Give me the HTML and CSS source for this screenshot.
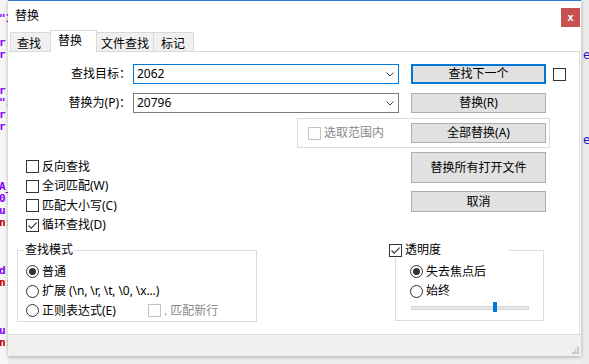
FILE: index.html
```html
<!DOCTYPE html>
<html lang="zh-CN">
<head>
<meta charset="utf-8">
<title>替换</title>
<link rel="stylesheet" href="styles.css">
</head>
<body>
<div class="screen">
  <div class="ed-left">
    <div class="p">"1</div><div></div><div class="p">r</div><div class="p">r</div><div></div><div></div>
    <div class="p">r</div><div class="p">":</div><div class="p">r</div><div class="p">r</div><div></div><div></div><div></div><div></div>
    <div class="p">A_</div><div class="p">0'</div><div class="p">u</div><div class="r">n:</div><div></div><div></div><div></div>
    <div class="p">d</div><div class="r">n:</div><div></div><div></div><div></div><div class="p">u</div><div class="r">n:</div>
  </div>

  <div class="dialog">
    <div class="titlebar">
      <span class="title">替换</span>
      <span class="close">x</span>
    </div>
    <div class="tabs">
      <span class="tab">查找</span><span class="tab active">替换</span><span class="tab">文件查找</span><span class="tab">标记</span>
    </div>
    <div class="panel">
      <div class="row">
        <span class="lbl">查找目标：</span>
        <div class="combo focus"><span>2062</span><svg class="chev" width="8" height="5" viewBox="0 0 8 5"><path d="M0.5 0.5 L4 4 L7.5 0.5" fill="none" stroke="#444" stroke-width="1"/></svg></div>
        <button class="btn default">查找下一个</button>
        <span class="cb top-cb"></span>
      </div>
      <div class="row row2">
        <span class="lbl">替换为(P)：</span>
        <div class="combo"><span>20796</span><svg class="chev" width="8" height="5" viewBox="0 0 8 5"><path d="M0.5 0.5 L4 4 L7.5 0.5" fill="none" stroke="#444" stroke-width="1"/></svg></div>
        <button class="btn">替换(R)</button>
      </div>
      <div class="scope">
        <span class="check dis"><span class="cb off"></span>选取范围内</span>
        <button class="btn">全部替换(A)</button>
      </div>
      <div class="mid">
        <div class="opts">
          <div class="check"><span class="cb"></span>反向查找</div>
          <div class="check"><span class="cb"></span>全词匹配(W)</div>
          <div class="check"><span class="cb"></span>匹配大小写(C)</div>
          <div class="check"><span class="cb"><svg width="11" height="11" viewBox="0 0 11 11"><path d="M1.5 5.5 L4.2 8.2 L9.6 2.6" fill="none" stroke="#333" stroke-width="1.1"/></svg></span>循环查找(D)</div>
        </div>
        <div class="midbtns">
          <button class="btn tall">替换所有打开文件</button>
          <button class="btn h21">取消</button>
        </div>
      </div>
      <div class="groups">
        <fieldset class="mode">
          <legend>查找模式</legend>
          <div class="check"><span class="rb on"></span>普通</div>
          <div class="check"><span class="rb"></span>扩展<span class="esc">(\n, \r, \t, \0, \x...)</span></div>
          <div class="check"><span class="rb"></span><span class="regex">正则表达式(E)</span><span class="cb off"></span><span class="distext">. 匹配新行</span></div>
        </fieldset>
        <fieldset class="trans">
          <legend><span class="cb"><svg width="11" height="11" viewBox="0 0 11 11"><path d="M1.5 5.5 L4.2 8.2 L9.6 2.6" fill="none" stroke="#333" stroke-width="1.1"/></svg></span><span class="lgtext">透明度</span></legend>
          <div class="check"><span class="rb on"></span>失去焦点后</div>
          <div class="check"><span class="rb"></span>始终</div>
          <div class="slider"><div class="track"></div><div class="thumb"></div></div>
        </fieldset>
      </div>
    </div>
    <div class="status">
      <svg width="7" height="7" viewBox="0 0 7 7">
        <rect x="5" y="0" width="2" height="2" fill="#c4c4c4"/>
        <rect x="2.5" y="2.5" width="2" height="2" fill="#c4c4c4"/>
        <rect x="5" y="2.5" width="2" height="2" fill="#c4c4c4"/>
        <rect x="0" y="5" width="2" height="2" fill="#c4c4c4"/>
        <rect x="2.5" y="5" width="2" height="2" fill="#c4c4c4"/>
        <rect x="5" y="5" width="2" height="2" fill="#c4c4c4"/>
      </svg>
    </div>
  </div>

  <div class="ed-right">
    <span class="e1">e</span>
    <span class="e2">e</span>
  </div>
</div>
</body>
</html>
```
FILE: styles.css
```css
html, body {
  margin: 0;
  padding: 0;
}
body {
  width: 589px;
  height: 364px;
  overflow: hidden;
  background: #eeeeee;
  font-family: "Noto Sans", "Noto Sans CJK SC", sans-serif;
  font-size: 12px;
  line-height: 16px;
  color: #000;
}
.screen {
  display: flex;
  height: 364px;
}

/* editor fragments behind dialog */
.ed-left {
  width: 8px;
  flex: none;
  overflow: hidden;
  background: #f6f6f6;
  padding-top: 13px;
  box-sizing: border-box;
  font: bold 11px/12px "DejaVu Sans Mono", monospace;
}
.ed-left div {
  height: 12px;
  white-space: pre;
  margin-left: -1px;
}
.ed-left .p { color: #8000ff; }
.ed-left .r { color: #c00000; }

.ed-right {
  width: 8px;
  flex: none;
  overflow: hidden;
  background: #ebebeb;
  font: 12px/12px "DejaVu Sans", sans-serif;
  color: #1a1ad0;
  padding-left: 2px;
  box-sizing: border-box;
}
.ed-right span { display: block; height: 12px; }
.ed-right .e1 { margin-top: 49px; }
.ed-right .e2 { margin-top: 73px; }

/* dialog */
.dialog {
  width: 573px;
  flex: none;
  height: 356px;
  box-sizing: border-box;
  border-top: 1px solid #2a7ad1;
  background: #fff;
  display: flex;
  flex-direction: column;
  box-shadow: 0 1px 4px rgba(0, 0, 0, 0.28);
  position: relative;
  z-index: 1;
}
.titlebar {
  height: 29px;
  flex: none;
  display: flex;
  justify-content: space-between;
  align-items: flex-start;
}
.title {
  padding-left: 7px;
  line-height: 29px;
}
.close {
  width: 19px;
  height: 19px;
  margin: 7px 1px 0 0;
  background: #c75050;
  color: #fff;
  font: bold 11px/18px "Liberation Sans", sans-serif;
  text-align: center;
}

.tabs {
  height: 21px;
  flex: none;
  display: flex;
  align-items: flex-end;
  padding-left: 2px;
  position: relative;
  z-index: 2;
}
.tab {
  height: 19px;
  box-sizing: border-box;
  border: 1px solid #d9d9d9;
  border-bottom: none;
  background: #f0f0f0;
  padding-top: 3px;
  line-height: 16px;
  margin-right: -1px;
}
.tab:nth-child(1) { width: 41px; padding-left: 6px; }
.tab:nth-child(2) { width: 47px; padding-left: 7px; }
.tab:nth-child(3) { width: 58px; padding-left: 4px; }
.tab:nth-child(4) { width: 41px; padding-left: 7px; }
.tab.active {
  height: 22px;
  margin-bottom: -1px;
  background: #fff;
  padding-top: 2px;
}

.panel {
  height: 283px;
  flex: none;
  box-sizing: border-box;
  border-top: 1px solid #d9d9d9;
  border-right: 1px solid #d9d9d9;
  margin-right: 1px;
  padding-top: 12px;
}
.row {
  display: flex;
  align-items: center;
  height: 20px;
}
.row2 { margin-top: 9px; }
.lbl {
  width: 123px;
  text-align: right;
  flex: none;
}
.combo {
  width: 266px;
  height: 20px;
  margin-left: 2px;
  box-sizing: border-box;
  border: 1px solid #7a7a7a;
  display: flex;
  align-items: center;
  justify-content: space-between;
  padding: 0 4px 0 3px;
  flex: none;
}
.combo.focus { border-color: #0078d7; }
.chev { display: block; }

.btn {
  width: 135px;
  height: 20px;
  box-sizing: border-box;
  border: 1px solid #adadad;
  background: #e1e1e1;
  font: inherit;
  line-height: 16px;
  color: #000;
  padding: 0;
  margin: 0 0 0 12px;
  flex: none;
}
.btn.default { border: 2px solid #0078d7; }
.btn.tall { height: 31px; }
.btn.h21 { height: 21px; }

.cb {
  width: 13px;
  height: 13px;
  box-sizing: border-box;
  border: 1px solid #333;
  background: #fff;
  flex: none;
  display: flex;
  align-items: center;
  justify-content: center;
  margin-right: 3px;
}
.cb svg { display: block; }
.cb.off { border-color: #c4c4c4; }
.top-cb { margin-left: 7px; }

.check {
  display: flex;
  align-items: center;
  height: 19.5px;
}
.check.dis, .distext { color: #8a8a8a; }

.scope {
  margin: 5px 0 0 289px;
  width: 253px;
  height: 30px;
  box-sizing: border-box;
  border: 1px solid #dcdcdc;
  display: flex;
  align-items: center;
  padding: 0 3px 0 10px;
}
.scope .btn { margin-left: auto; }

.mid {
  display: flex;
  margin-top: 4px;
}
.opts {
  margin-left: 18px;
  width: 385px;
  padding-top: 5px;
  flex: none;
}
.midbtns {
  display: flex;
  flex-direction: column;
  gap: 8px;
}
.midbtns .btn { margin-left: 0; }

.groups {
  display: flex;
  align-items: flex-start;
  margin: 7px 0 0 9px;
}
fieldset {
  margin: 0;
  border: 1px solid #dcdcdc;
  min-width: 0;
  box-sizing: border-box;
}
legend {
  padding: 0 1px;
  line-height: 16px;
}
.mode {
  width: 240px;
  padding: 4px 0 0 6px;
}
.mode .check { margin-left: 2px; }
.esc {
  font-size: 12px;
  margin-left: 3px;
  letter-spacing: -0.1px;
}
.regex {
  width: 106px;
  flex: none;
}
.trans {
  width: 149px;
  margin-left: 138px;
  padding: 4px 0 5px 14px;
}
.trans legend {
  display: flex;
  align-items: center;
  margin-left: -21px;
  padding: 0 68px 0 0;
}
.lgtext { white-space: nowrap; }
.rb {
  width: 13px;
  height: 13px;
  box-sizing: border-box;
  border: 1px solid #333;
  border-radius: 50%;
  background: #fff;
  display: flex;
  align-items: center;
  justify-content: center;
  margin-right: 3px;
  flex: none;
}
.rb.on::after {
  content: "";
  width: 7px;
  height: 7px;
  border-radius: 50%;
  background: #333;
}
.slider {
  position: relative;
  height: 14px;
  width: 118px;
  margin-left: 1px;
  display: flex;
  align-items: center;
}
.track {
  width: 118px;
  height: 4px;
  box-sizing: border-box;
  background: #e7e7e7;
  border: 1px solid #d6d6d6;
}
.thumb {
  position: absolute;
  left: 82px;
  top: 1px;
  width: 4px;
  height: 10px;
  background: #0078d7;
}

.status {
  height: 22px;
  flex: none;
  box-sizing: border-box;
  border-top: 1px solid #dadada;
  background: #f0f0f0;
  display: flex;
  justify-content: flex-end;
  align-items: flex-end;
  padding: 0 2px 2px 0;
}
.status svg { display: block; }
```
